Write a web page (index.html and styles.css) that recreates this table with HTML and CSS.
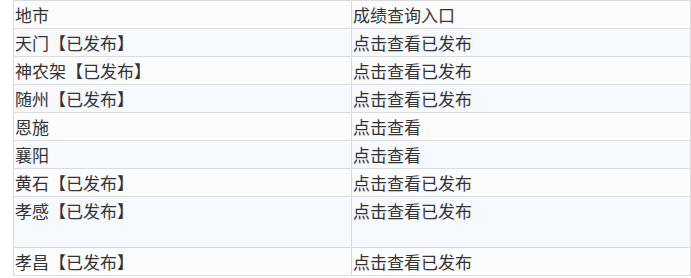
FILE: index.html
```html
<!DOCTYPE html>
<html lang="zh-CN">
<head>
<meta charset="utf-8">
<title>成绩查询</title>
<link rel="stylesheet" href="styles.css">
</head>
<body>
<table class="score-table">
  <colgroup><col class="col-city"><col class="col-link"></colgroup>
  <tr class="row-a"><td>地市</td><td>成绩查询入口</td></tr>
  <tr class="row-b"><td>天门【已发布】</td><td>点击查看已发布</td></tr>
  <tr class="row-a"><td>神农架【已发布】</td><td>点击查看已发布</td></tr>
  <tr class="row-b"><td>随州【已发布】</td><td>点击查看已发布</td></tr>
  <tr class="row-a"><td>恩施</td><td>点击查看</td></tr>
  <tr class="row-b"><td>襄阳</td><td>点击查看</td></tr>
  <tr class="row-a"><td>黄石【已发布】</td><td>点击查看已发布</td></tr>
  <tr class="row-b row-tall"><td>孝感【已发布】</td><td>点击查看已发布</td></tr>
  <tr class="row-a"><td>孝昌【已发布】</td><td>点击查看已发布</td></tr>
</table>
</body>
</html>
```
FILE: styles.css
```css
html, body {
  margin: 0;
  padding: 0;
  background: #ffffff;
}
.score-table {
  margin-left: 13px;
  border-collapse: collapse;
  table-layout: fixed;
  width: 677px;
  font-family: "Noto Sans CJK SC", "Noto Sans", sans-serif;
  font-size: 17px;
  color: #333333;
}
.col-city { width: 338px; }
.col-link { width: 339px; }
.score-table td {
  border: 1px solid #dcdcdf;
  padding: 0 0 0 1px;
  height: 27px;
  line-height: 27px;
  vertical-align: top;
  white-space: nowrap;
}
.row-a { background: #fcfcfd; }
.row-b { background: #f6f9fe; }
.row-tall td { height: 50px; }
```
